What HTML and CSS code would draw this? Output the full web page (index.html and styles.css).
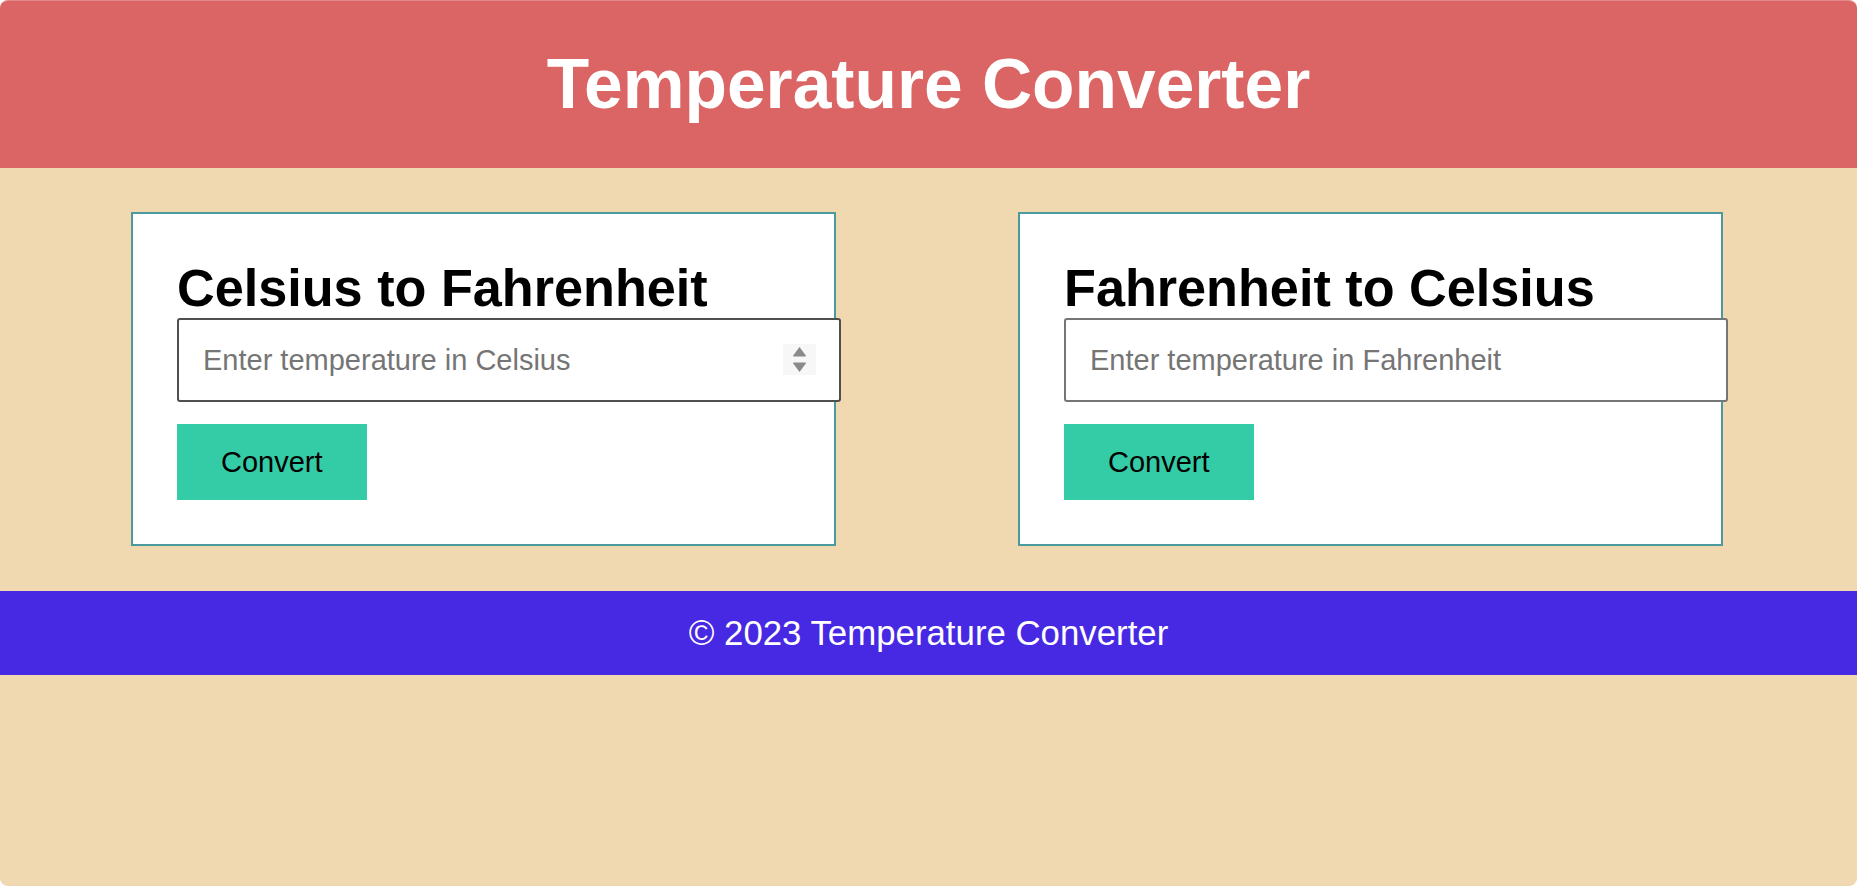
FILE: index.html
```html
<!DOCTYPE html>
<html lang="en">
<head>
<meta charset="utf-8">
<title>Temperature Converter</title>
<link rel="stylesheet" href="styles.css">
</head>
<body>
<div class="page">
  <header class="site-header">
    <h1 class="site-title">Temperature Converter</h1>
  </header>
  <main class="converters">
    <section class="card">
      <h2 class="card-title">Celsius to Fahrenheit</h2>
      <div class="field">
        <input class="temp-input temp-input--hover" type="text" placeholder="Enter temperature in Celsius">
        <span class="spinner" aria-hidden="true">
          <svg width="15" height="27" viewBox="0 0 15 27"><path d="M7.5 1 L13.8 9.6 Q14.4 10.6 13.2 10.6 L1.8 10.6 Q0.6 10.6 1.2 9.6 Z" fill="#8a8a8a"/><path d="M7.5 26 L13.8 17.4 Q14.4 16.4 13.2 16.4 L1.8 16.4 Q0.6 16.4 1.2 17.4 Z" fill="#8a8a8a"/></svg>
        </span>
      </div>
      <button class="convert-btn" type="button">Convert</button>
    </section>
    <section class="card">
      <h2 class="card-title">Fahrenheit to Celsius</h2>
      <div class="field">
        <input class="temp-input" type="text" placeholder="Enter temperature in Fahrenheit">
      </div>
      <button class="convert-btn" type="button">Convert</button>
    </section>
  </main>
  <footer class="site-footer">
    <p class="footer-text">© 2023 Temperature Converter</p>
  </footer>
</div>
</body>
</html>
```

FILE: styles.css
```css
html {
  background: #ffffff;
}
body {
  margin: 0;
  font-family: "Liberation Sans", Arial, sans-serif;
}
.page {
  height: 886px;
  background: #f0d8b0;
  border-radius: 8px;
  overflow: hidden;
  border-top: 1px solid #e08a8a;
  box-sizing: border-box;
}
.site-header {
  background: #db6464;
  height: 167px;
  padding-top: 43px;
  box-sizing: border-box;
}
.site-title {
  margin: 0;
  text-align: center;
  color: #ffffff;
  font-size: 69.5px;
  line-height: 80px;
  font-weight: bold;
}
.converters {
  display: flex;
  gap: 182px;
  padding: 44px 0 0 131px;
}
.card {
  width: 705px;
  box-sizing: border-box;
  background: #ffffff;
  border: 2px solid #4a9a9f;
  padding: 44px;
}
.card-title {
  margin: 0;
  font-size: 52.2px;
  line-height: 60px;
  font-weight: bold;
  color: #000000;
}
.field {
  position: relative;
  width: 664px;
}
.temp-input {
  display: block;
  width: 664px;
  height: 84px;
  box-sizing: border-box;
  padding: 0 24px;
  border: 2px solid #767676;
  border-radius: 3px;
  background: #ffffff;
  font-family: "Liberation Sans", Arial, sans-serif;
  font-size: 29px;
  color: #000;
  outline: none;
}
.temp-input--hover {
  border-color: #4f4f4f;
}
.temp-input::placeholder {
  color: #757575;
}
.spinner {
  position: absolute;
  right: 25px;
  top: 26px;
  width: 33px;
  height: 31px;
  background: #f7f7f7;
  display: flex;
  align-items: center;
  justify-content: center;
}
.convert-btn {
  display: block;
  margin-top: 22px;
  height: 76px;
  padding: 0 44px;
  border: none;
  background: #33cca6;
  color: #000000;
  font-family: "Liberation Sans", Arial, sans-serif;
  font-size: 29px;
  line-height: 76px;
  cursor: pointer;
}
.site-footer {
  margin-top: 45px;
  background: #4829e3;
  height: 84px;
  padding-top: 22px;
  box-sizing: border-box;
}
.footer-text {
  margin: 0;
  text-align: center;
  color: #ffffff;
  font-size: 34.8px;
  line-height: 40px;
}
```
